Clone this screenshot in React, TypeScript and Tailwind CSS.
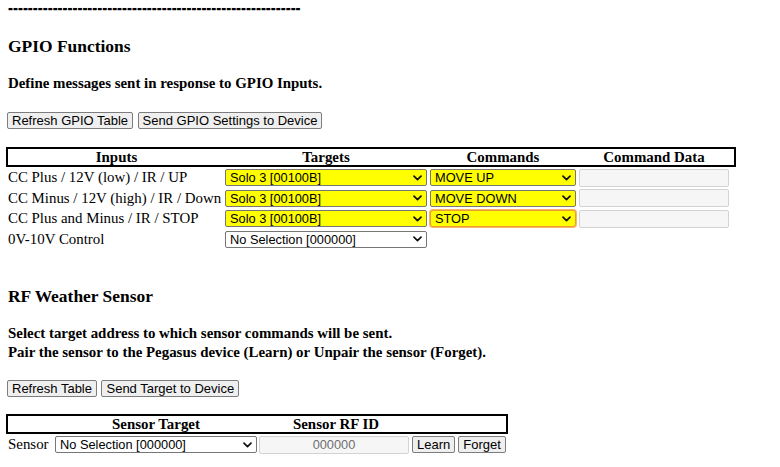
import React from 'react';
import clsx from 'clsx';

type GpioRow = {
  input: string;
  target: string;
  command?: string;
  focused?: boolean;
};

const gpioRows: GpioRow[] = [
  { input: 'CC Plus / 12V (low) / IR / UP', target: 'Solo 3 [00100B]', command: 'MOVE UP' },
  { input: 'CC Minus / 12V (high) / IR / Down', target: 'Solo 3 [00100B]', command: 'MOVE DOWN' },
  { input: 'CC Plus and Minus / IR / STOP', target: 'Solo 3 [00100B]', command: 'STOP', focused: true },
  { input: '0V-10V Control', target: 'No Selection [000000]' },
];

const Chevron: React.FC = () => (
  <svg width="9" height="6" viewBox="0 0 9 6" className="shrink-0">
    <path d="M1 1.2l3.5 3.4L8 1.2" fill="none" stroke="#111" strokeWidth="1.7" strokeLinecap="round" strokeLinejoin="round" />
  </svg>
);

// fake native select so it renders the same everywhere
const FakeSelect: React.FC<{ label: string; className: string; yellow?: boolean; focused?: boolean }> = ({
  label,
  className,
  yellow,
  focused,
}) => (
  <div
    className={clsx(
      "flex h-[17px] shrink-0 items-center justify-between rounded-[2px] border pl-[4px] pr-[4px] font-['Liberation_Sans',Arial,sans-serif] text-[12.8px] leading-[15px] text-black",
      yellow ? 'bg-[#ffff00]' : 'bg-white',
      focused ? 'rounded-[3px] border-[#ee9a35] shadow-[0_0_0_1px_#f6b866]' : 'border-[#767676]',
      className,
    )}
  >
    <span className="truncate">{label}</span>
    <Chevron />
  </div>
);

const DataInput: React.FC<{ value?: string; className: string }> = ({ value, className }) => (
  <div
    className={clsx(
      "flex h-[18px] shrink-0 items-center justify-center rounded-[2px] border border-[#d3d3d3] bg-[#f6f6f6] font-['Liberation_Sans',Arial,sans-serif] text-[12.8px] leading-[15px] text-[#6f6f6f]",
      className,
    )}
  >
    {value}
  </div>
);

const Button: React.FC<{ children: React.ReactNode }> = ({ children }) => (
  <button
    type="button"
    className="flex h-[17px] shrink-0 items-center rounded-[2px] border border-[#7d7d7d] bg-[#efefef] px-[4px] font-['Liberation_Sans',Arial,sans-serif] text-[13px] leading-[15px] whitespace-nowrap text-black"
  >
    {children}
  </button>
);

const App: React.FC = () => {
  return (
    <div className="h-[467px] w-[780px] overflow-hidden bg-white pl-[8px] font-['Liberation_Serif','Times_New_Roman',serif] text-[14.9px] text-black">
      <div className="h-[15px] leading-[15px] font-bold whitespace-nowrap [text-shadow:0_0.7px_0_#000]">
        {'-'.repeat(59)}
      </div>

      {/* GPIO section */}
      <div className="mt-[21px] h-[20px] text-[17.45px] leading-[20px] font-bold">GPIO Functions</div>
      <div className="mt-[18.5px] h-[17px] leading-[17px] font-bold">Define messages sent in response to GPIO Inputs.</div>

      <div className="mt-[20.5px] -ml-[1px] flex gap-[4.5px]">
        <Button>Refresh GPIO Table</Button>
        <Button>Send GPIO Settings to Device</Button>
      </div>

      <div className="mt-[18px] -ml-[2px] flex h-[20px] w-[730px] border-2 border-black leading-[16px] font-bold">
        <div className="w-[217px] text-center">Inputs</div>
        <div className="w-[202px] text-center">Targets</div>
        <div className="ml-[3px] w-[146px] text-center">Commands</div>
        <div className="ml-[3px] w-[150px] text-center">Command Data</div>
      </div>

      <div className="mt-[2px] flex flex-col gap-[3.5px]">
        {gpioRows.map((row) => (
          <div key={row.input} className="flex h-[17px] items-center">
            <div className="w-[217px] shrink-0 leading-[17px] whitespace-nowrap">{row.input}</div>
            <FakeSelect label={row.target} className="w-[202px]" yellow={!!row.command} />
            {row.command && (
              <>
                <FakeSelect label={row.command} className="ml-[3px] w-[146px]" yellow focused={row.focused} />
                <DataInput className="ml-[3px] w-[150px]" />
              </>
            )}
          </div>
        ))}
      </div>

      {/* RF sensor section */}
      <div className="mt-[38px] h-[20px] text-[17.45px] leading-[20px] font-bold">RF Weather Sensor</div>
      <div className="mt-[18px] h-[19.5px] leading-[19.5px] font-bold">Select target address to which sensor commands will be sent.</div>
      <div className="h-[19.5px] leading-[19.5px] font-bold">Pair the sensor to the Pegasus device (Learn) or Unpair the sensor (Forget).</div>

      <div className="mt-[17px] -ml-[1px] flex gap-[4.5px]">
        <Button>Refresh Table</Button>
        <Button>Send Target to Device</Button>
      </div>

      <div className="mt-[17.5px] -ml-[2px] flex h-[20px] w-[502px] border-2 border-black leading-[16px] font-bold">
        <div className="w-[47px]" />
        <div className="w-[202px] text-center">Sensor Target</div>
        <div className="ml-[2px] w-[154px] text-center">Sensor RF ID</div>
      </div>

      <div className="mt-[2px] flex h-[17.5px] items-center">
        <div className="w-[47px] shrink-0 leading-[17px]">Sensor</div>
        <FakeSelect label="No Selection [000000]" className="w-[202px]" />
        <DataInput value="000000" className="ml-[2px] w-[150px]" />
        <div className="ml-[3px] flex gap-[3px]">
          <Button>Learn</Button>
          <Button>Forget</Button>
        </div>
      </div>
    </div>
  );
};

export default App;
